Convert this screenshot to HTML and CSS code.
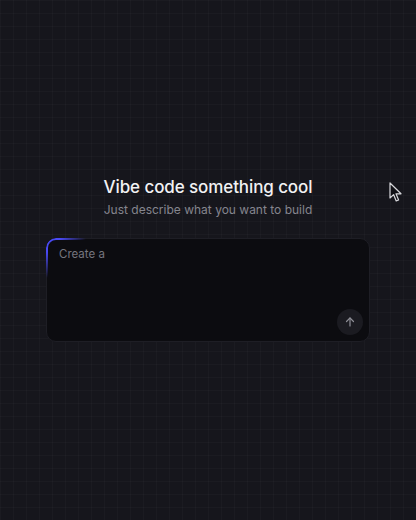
FILE: index.html
```html
<!DOCTYPE html>
<html>
<head>
<meta charset="utf-8">
<link rel="stylesheet" href="styles.css">
</head>
<body>
<main class="page">
  <section class="hero">
    <h1 class="title">Vibe code something cool</h1>
    <p class="subtitle">Just describe what you want to build</p>
    <div class="composer">
      <div class="placeholder">Create a</div>
      <div class="actions">
        <button class="send" aria-label="Send">
          <svg width="12" height="12" viewBox="0 0 24 24" fill="none" stroke="currentColor" stroke-width="2.4" stroke-linecap="round" stroke-linejoin="round"><path d="M12 20V4"/><path d="M5 11l7-7 7 7"/></svg>
        </button>
      </div>
    </div>
  </section>
  <svg class="cursor" width="14" height="21" viewBox="0 0 14 21"><path d="M1 1 L1 16 L4.6 12.6 L7.2 19 L9.6 18 L7 11.8 L12 11.8 Z" fill="#111116" stroke="#d8d8dc" stroke-width="1.2" stroke-linejoin="round"/></svg>
</main>
</body>
</html>
```

FILE: styles.css
```css
* { box-sizing: border-box; }
html, body { margin: 0; padding: 0; }
body {
  width: 416px;
  height: 520px;
  background-color: #16161c;
  background-image:
    linear-gradient(to right, rgba(255,255,255,0.022) 1px, transparent 1px),
    linear-gradient(to bottom, rgba(255,255,255,0.022) 1px, transparent 1px);
  background-size: 13px 13px;
  font-family: Inter, "Noto Sans", sans-serif;
  overflow: hidden;
}
.page {
  position: relative;
  width: 416px;
  height: 520px;
  display: flex;
  align-items: center;
  justify-content: center;
}
.hero {
  display: flex;
  flex-direction: column;
  align-items: center;
  margin-bottom: 3px;
}
.title {
  margin: 0;
  font-size: 17px;
  font-weight: 500;
  color: #f2f2f4;
  letter-spacing: -0.1px;
  line-height: 22px;
}
.subtitle {
  margin: 4px 0 0;
  font-size: 12px;
  color: #85858e;
  line-height: 16px;
}
.composer {
  position: relative;
  margin-top: 20px;
  width: 324px;
  height: 104px;
  background: #0c0c10;
  border: 1px solid #1e1e25;
  border-radius: 10px;
  padding: 8px 6px 6px 12px;
  display: flex;
  flex-direction: column;
  justify-content: space-between;
}
.composer::before {
  content: "";
  position: absolute;
  inset: -1px;
  border-radius: 10px;
  border-top: 2px solid #4a4af5;
  border-left: 2px solid #4a4af5;
  -webkit-mask-image: radial-gradient(circle at 0 0, #000 0, #000 14px, transparent 40px);
  mask-image: radial-gradient(circle at 0 0, #000 0, #000 14px, transparent 40px);
  pointer-events: none;
}
.placeholder {
  font-size: 11.5px;
  color: #75757e;
  line-height: 14px;
}
.actions {
  display: flex;
  justify-content: flex-end;
}
.send {
  width: 26px;
  height: 26px;
  border-radius: 50%;
  border: none;
  background: #1b1b21;
  color: #8e8e96;
  display: flex;
  align-items: center;
  justify-content: center;
  padding: 0;
}
.cursor {
  position: absolute;
  left: 389px;
  top: 182px;
}
```
